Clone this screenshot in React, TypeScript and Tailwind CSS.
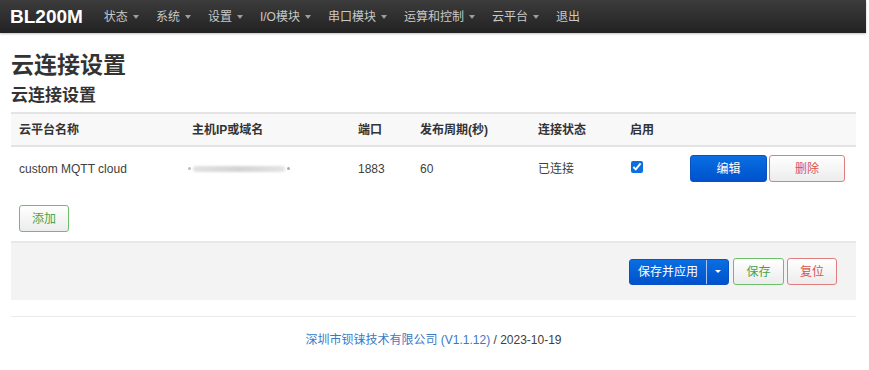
const font = { fontFamily: '"Liberation Sans", "Noto Sans CJK SC", sans-serif' };

const menus = [
  { label: "状态", caret: true },
  { label: "系统", caret: true },
  { label: "设置", caret: true },
  { label: "I/O模块", caret: true },
  { label: "串口模块", caret: true },
  { label: "运算和控制", caret: true },
  { label: "云平台", caret: true },
  { label: "退出", caret: false },
];

function Caret({ color = "border-t-[#9d9d9d]" }: { color?: string }) {
  return (
    <span
      className={`ml-[5px] inline-block h-0 w-0 border-x-[3.5px] border-t-[4px] border-x-transparent align-middle ${color}`}
    />
  );
}

function Navbar() {
  return (
    <div className="flex h-[33px] w-[866px] items-center bg-gradient-to-b from-[#3c3c3c] to-[#222] shadow-[0_1px_2px_rgba(0,0,0,0.25)]">
      <div className="ml-[10px] mr-[21px] text-[19px] font-bold leading-none text-white">BL200M</div>
      <div className="flex items-center text-[12px] text-[#c8c8c8]">
        {menus.map((m) => (
          <div key={m.label} className="mr-[17px] flex items-center">
            {m.label}
            {m.caret && <Caret />}
          </div>
        ))}
      </div>
    </div>
  );
}

function Btn({
  children,
  tone,
  className = "",
}: {
  children: React.ReactNode;
  tone: "blue" | "green" | "red";
  className?: string;
}) {
  const toneClass =
    tone === "blue"
      ? "border-[#0a52c4] bg-gradient-to-b from-[#0b6ee2] to-[#0052cc] text-white"
      : tone === "green"
        ? "border-[#6cc06c] bg-gradient-to-b from-white to-[#ececec] text-[#47a447]"
        : "border-[#e07e7e] bg-gradient-to-b from-white to-[#ececec] text-[#d9534f]";
  return (
    <button
      type="button"
      className={`flex h-[27px] items-center justify-center rounded-[3px] border text-[12px] ${toneClass} ${className}`}
    >
      {children}
    </button>
  );
}

export default function App() {
  return (
    <div className="h-[370px] w-[869px] bg-white text-[#404040]" style={font}>
      <Navbar />
      <div className="mx-[11px] w-[845px]">
        <h2 className="mt-[18px] text-[23px] font-bold leading-[28px] text-[#333]">云连接设置</h2>
        <h3 className="mt-[6px] text-[17px] font-bold leading-[22px] text-[#333]">云连接设置</h3>

        <div className="mt-[5px] border-t-2 border-[#e4e4e4]">
          <div className="flex h-[33px] items-center border-b-2 border-[#e4e4e4] bg-[#f8f8f8] text-[12px] font-bold text-[#333]">
            <div className="w-[181px] pl-[8px]">云平台名称</div>
            <div className="w-[166px]">主机IP或域名</div>
            <div className="w-[62px]">端口</div>
            <div className="w-[118px]">发布周期(秒)</div>
            <div className="w-[92px]">连接状态</div>
            <div>启用</div>
          </div>
          <div className="flex h-[43px] items-center text-[12px] text-[#404040]">
            <div className="w-[181px] pl-[8px]">custom MQTT cloud</div>
            <div className="w-[166px]">
              <div className="-ml-[4px] flex items-center gap-[2px]">
                <span className="h-[3px] w-[3px] rounded-full bg-[#bbb]" />
                <span className="h-[6px] w-[92px] rounded-[3px] bg-gradient-to-r from-[#e2e2e2] via-[#d4d4d4] to-[#e4e4e4] blur-[1px]" />
                <span className="h-[3px] w-[3px] rounded-full bg-[#aaa]" />
              </div>
            </div>
            <div className="w-[62px]">1883</div>
            <div className="w-[118px]">60</div>
            <div className="w-[92px]">已连接</div>
            <div className="w-[60px]">
              <input type="checkbox" defaultChecked className="ml-[1px] h-[12px] w-[12px] accent-[#0a6fe0]" />
            </div>
            <Btn tone="blue" className="w-[77px]">编辑</Btn>
            <Btn tone="red" className="ml-[2px] w-[76px]">删除</Btn>
          </div>
        </div>

        <Btn tone="green" className="ml-[8px] mt-[15px] w-[50px]">添加</Btn>

        <div className="mt-[9px] flex h-[59px] items-center justify-end border-t-2 border-[#e8e8e8] bg-[#f3f3f3] pr-[19px]">
          <div className="flex h-[26px] w-[100px] items-stretch overflow-hidden rounded-[3px] border border-[#0a52c4] bg-gradient-to-b from-[#0b6ee2] to-[#0052cc] text-[12px] text-white">
            <div className="flex flex-1 items-center justify-center">保存并应用</div>
            <div className="flex w-[22px] items-center justify-center border-l border-[#a9c6f0]">
              <span className="inline-block h-0 w-0 border-x-[3px] border-t-[3px] border-x-transparent border-t-white" />
            </div>
          </div>
          <Btn tone="green" className="ml-[4px] h-[26px] w-[51px]">保存</Btn>
          <Btn tone="red" className="ml-[3px] h-[26px] w-[50px]">复位</Btn>
        </div>

        <div className="mt-[16px] border-t border-[#eaeaea]" />
        <div className="mt-[14px] text-center text-[12px] text-[#404040]">
          <span className="text-[#3a78c3]">深圳市钡铼技术有限公司 (V1.1.12)</span> / 2023-10-19
        </div>
      </div>
    </div>
  );
}
